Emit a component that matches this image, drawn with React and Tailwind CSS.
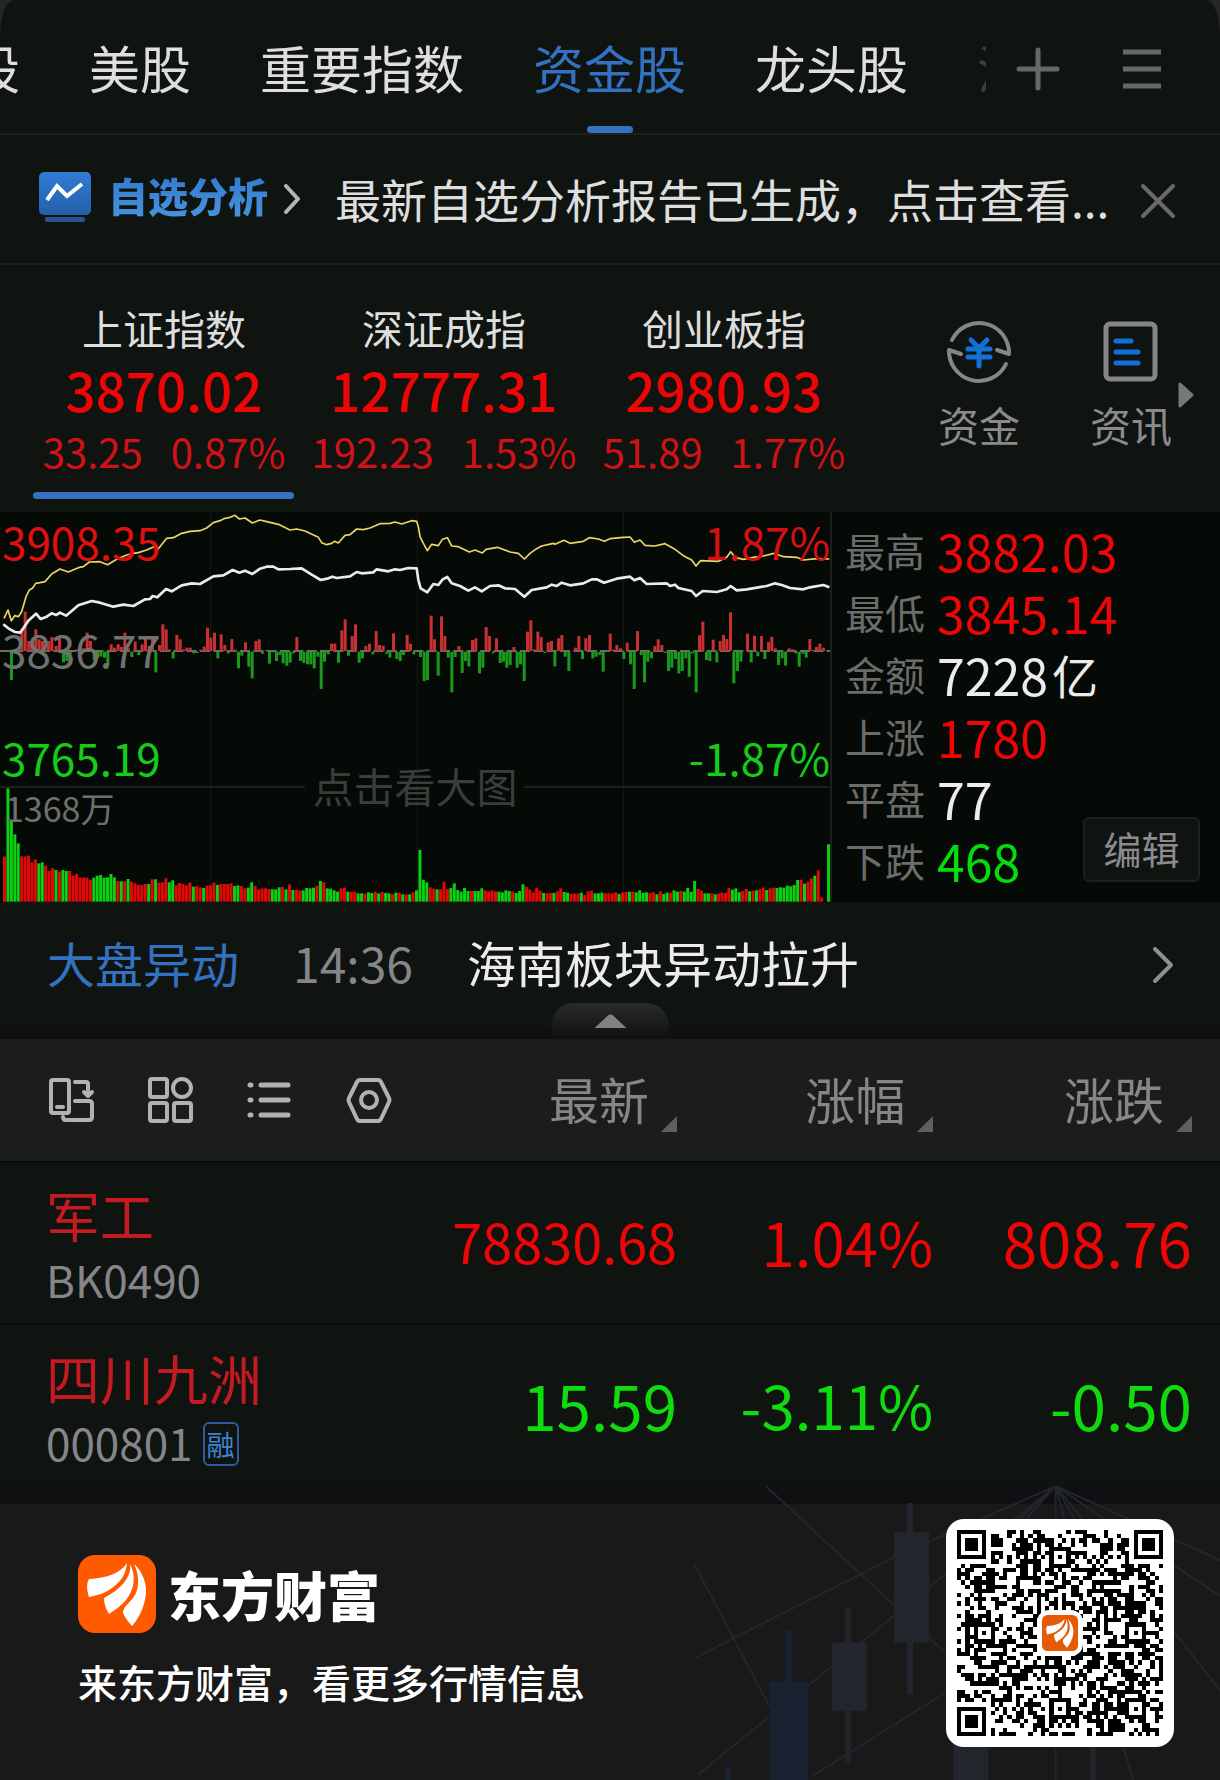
import React from "react";

const TABS = ["港股", "美股", "重要指数", "资金股", "龙头股", "沪股通"];

const INDICES = [
  { name: "上证指数", value: "3870.02", diff: "33.25", pct: "0.87%", active: true },
  { name: "深证成指", value: "12777.31", diff: "192.23", pct: "1.53%" },
  { name: "创业板指", value: "2980.93", diff: "51.89", pct: "1.77%" },
];

const STATS = [
  { label: "最高", value: "3882.03", tone: "text-[#ee0505]" },
  { label: "最低", value: "3845.14", tone: "text-[#ee0505]" },
  { label: "金额", value: "7228", unit: "亿", tone: "text-[#ececec]" },
  { label: "上涨", value: "1780", tone: "text-[#ee0505]" },
  { label: "平盘", value: "77", tone: "text-[#ececec]" },
  { label: "下跌", value: "468", tone: "text-[#06db0e]" },
];

const STOCKS = [
  { name: "军工", code: "BK0490", last: "78830.68", pct: "1.04%", diff: "808.76", tone: "text-[#ee0505]", lastSize: "text-[54px]" },
  { name: "四川九洲", code: "000801", tag: "融", last: "15.59", pct: "-3.11%", diff: "-0.50", tone: "text-[#0fdc0f]", lastSize: "text-[62px]" },
];

/* Chart data, in thirds of a pixel. */
const AVG_LINE =
  "12,355 24,330 34,362 44,347 55,350 65,335 78,290 88,270 98,264 107,250 120,248 135,245 155,222 180,207 205,216 235,203 250,200 268,186 300,185 323,194 350,178 380,165 400,160 415,158 440,150 460,141 475,146 500,115 520,113 545,100 570,94 600,92 620,84 640,68 660,62 675,55 690,52 705,46 718,57 735,54 757,69 780,60 800,65 835,73 870,90 890,87 915,93 955,112 965,128 980,134 995,130 1003,124 1015,129 1035,106 1050,104 1070,87 1090,89 1110,84 1140,71 1170,70 1185,66 1205,72 1235,62 1250,64 1256,85 1260,110 1270,130 1282,152 1295,133 1315,137 1327,118 1342,113 1355,138 1375,140 1408,156 1425,150 1447,159 1458,148 1492,142 1530,156 1555,160 1573,177 1590,160 1610,146 1625,138 1660,130 1665,133 1692,121 1710,130 1750,124 1768,113 1795,117 1813,124 1830,116 1870,112 1890,111 1903,127 1920,120 1935,136 1965,138 1995,131 2025,148 2050,167 2075,180 2088,198 2102,182 2155,184 2180,172 2192,155 2205,172 2230,178 2260,172 2290,168 2322,160 2350,170 2390,172 2410,180 2450,176 2488,177";
const PRICE_LINE =
  "10,373 25,385 45,396 60,398 70,385 85,362 108,341 122,357 140,350 155,340 168,345 180,338 198,347 215,333 235,316 275,303 300,308 340,320 370,314 400,318 435,298 450,297 458,288 472,292 498,267 515,274 545,256 575,250 600,252 640,229 670,226 698,210 718,218 735,212 757,222 780,206 800,200 820,200 835,208 870,207 905,205 935,224 962,240 985,235 997,230 1010,234 1050,229 1070,216 1085,220 1120,217 1130,208 1165,214 1185,208 1200,210 1225,204 1250,205 1255,240 1262,265 1282,277 1300,252 1315,255 1328,238 1342,231 1355,250 1380,258 1405,272 1425,262 1445,274 1470,258 1495,256 1515,265 1545,267 1573,290 1595,270 1640,262 1655,254 1670,258 1685,248 1710,256 1750,250 1775,238 1790,238 1812,248 1850,236 1890,230 1903,241 1920,234 1940,252 2000,250 2010,258 2025,254 2035,264 2075,273 2088,288 2108,273 2150,276 2180,268 2192,258 2210,271 2240,268 2275,262 2300,258 2325,250 2345,255 2370,264 2410,268 2430,262 2470,255 2488,262";

const MOMENTUM = [
  [34,-85],[65,60],[75,118],[86,30],[96,30],[107,65],[117,35],[127,30],[145,30],[155,42],[168,15],[178,40],[190,-32],[200,-28],[210,-10],[230,5],[240,10],[250,8],[261,55],[271,30],[282,-25],[292,-20],[302,-15],[313,-18],[323,-40],[333,20],[343,10],[354,20],[364,12],[374,55],[385,8],[395,-16],[405,28],[416,-10],[426,20],[436,45],[447,15],[457,42],[467,-62],[478,18],[488,80],[498,65],[508,5],[519,-20],[530,48],[540,35],[550,5],[560,10],[570,10],[581,-5],[591,-4],[602,4],[612,13],[622,70],[632,40],[643,55],[653,-20],[663,50],[674,18],[684,-5],[695,36],[705,4],[715,-50],[725,-12],[736,26],[746,-45],[756,-80],[767,30],[777,35],[787,-6],[798,2],[808,-36],[818,-2],[829,-28],[839,-10],[849,-35],[860,-42],[870,-33],[880,-5],[890,42],[901,-28],[911,-34],[922,-38],[932,-38],[942,-50],[953,-15],[963,-112],[973,-30],[984,-8],[994,22],[1004,22],[1015,-33],[1025,62],[1035,95],[1045,-12],[1056,45],[1066,80],[1077,-33],[1087,-20],[1097,15],[1108,22],[1118,-8],[1128,60],[1138,18],[1149,16],[1159,-6],[1169,-18],[1180,53],[1190,-22],[1200,-28],[1210,-10],[1221,48],[1231,22],[1241,-8],
  [1261,-16],[1272,-88],[1282,-85],[1293,106],[1303,35],[1314,-72],[1324,104],[1334,45],[1344,-18],[1355,-122],[1365,-16],[1376,15],[1386,-64],[1396,-28],[1406,-44],[1417,33],[1427,38],[1438,-65],[1448,-48],[1458,72],[1468,45],[1479,-5],[1489,38],[1500,-34],[1510,-30],[1520,-48],[1530,-40],[1541,12],[1551,-48],[1561,-38],[1572,-88],[1582,58],[1592,92],[1602,5],[1613,58],[1623,42],[1634,-4],[1644,26],[1654,30],[1664,-44],[1675,38],[1685,48],[1695,-15],[1706,-58],[1726,10],[1736,45],[1747,-22],[1757,38],[1768,48],[1778,-20],[1788,-15],[1799,-10],[1809,-60],[1830,52],[1840,4],[1850,18],[1861,8],[1871,-22],[1881,25],[1891,-38],[1902,-112],[1912,60],[1923,-10],[1933,-92],[1943,-30],[1954,-20],[1964,15],[1974,35],[1985,18],[1995,-4],[2005,-58],[2015,-48],[2026,-22],[2036,-65],[2046,-58],[2057,-20],[2067,-75],[2077,-5],[2088,-122],[2098,47],[2108,88],[2119,-25],[2129,-28],[2139,34],[2150,-32],[2160,30],[2170,48],[2180,36],[2191,116],[2201,-95],[2212,-58],[2222,-30],[2242,52],[2253,-32],[2263,46],[2273,-14],[2284,45],[2294,-22],[2305,27],[2315,43],[2325,8],[2335,-40],[2346,-20],[2356,-42],[2367,8],[2377,5],[2387,-5],[2397,-45],[2408,-6],[2418,-18],[2429,36],[2439,3],[2449,12],[2459,22],[2470,10],
];

/* Positive bars are red, negative bars are green. */
const VOLUME = [
  135,-340,-245,-202,-175,136,136,138,118,127,-115,-118,108,92,100,-95,90,-95,-92,92,78,83,73,72,72,66,-72,-78,-80,-72,-73,-83,-73,62,-61,61,-68,60,55,50,50,53,-53,67,-67,57,58,70,-58,-64,50,56,53,49,57,-45,47,43,-41,48,49,57,-50,53,53,53,55,-47,-49,47,40,-42,-58,47,37,40,40,38,-37,-37,-43,44,-37,52,-35,36,34,-34,-41,-40,-42,48,-62,58,-40,-39,-34,-30,40,42,-30,29,30,-25,-25,24,-28,-26,30,-25,29,-26,-25,22,-27,27,-22,22,-22,28,
  -34,-155,-66,-58,43,39,-37,37,60,38,-41,-55,-35,-30,-41,-32,32,-32,-32,-40,34,31,34,31,-30,-28,-34,-32,30,-26,-32,-52,44,36,28,42,33,-26,25,26,-26,31,40,-29,-27,24,24,24,-27,20,31,33,-25,-25,-27,25,25,25,28,-23,28,29,-30,30,-28,-34,-27,-28,26,28,-22,31,-23,-27,27,-34,-30,33,-30,-41,-30,-62,38,33,-25,-25,25,-22,24,27,26,41,-36,-40,-28,32,38,-31,33,-34,38,42,-35,40,42,-41,-43,-42,-48,-46,-50,-65,66,-54,60,70,-78,94,12,0,-172,
];

function Chart() {
  return (
    <svg viewBox="0 36 2490 1170" preserveAspectRatio="none" className="block h-full w-full" role="img" aria-label="上证指数分时图">
      <g stroke="#161b18" strokeWidth="3">
        <path d="M632 36V1205M1252 36V1205M1870 36V1205" />
      </g>
      <path d="M0 861H915M1572 861H2490" stroke="#252826" strokeWidth="5" />
      <path d="M0 453H2490" stroke="#8c8f8d" strokeWidth="4" strokeDasharray="30 10" />
      {MOMENTUM.map(([x, h]) => (
        <rect key={x} x={x - 4} y={h > 0 ? 453 - h : 455} width="9" height={Math.abs(h)} fill={h > 0 ? "#c93032" : "#1b991d"} />
      ))}
      {VOLUME.map((h, i) => (
        <rect key={i} x={9 + i * 10.3} y={1205 - Math.abs(h)} width="9" height={Math.abs(h)} fill={h > 0 ? "#e20808" : "#0bcf10"} />
      ))}
      <polyline points={AVG_LINE} fill="none" stroke="#ead565" strokeWidth="5" strokeLinejoin="round" />
      <polyline points={PRICE_LINE} fill="none" stroke="#ebebeb" strokeWidth="8" strokeLinejoin="round" />
    </svg>
  );
}

/* The three-feather mark on an orange tile. */
function Mark({ className, fill = "#ff5a00", radius = 17 }) {
  return (
    <svg viewBox="0 0 78 78" className={className} aria-hidden="true">
      <rect width="78" height="78" rx={radius} fill={fill} />
      <g fill="#fff">
        <path d="M49 8C43 18 29 23 11 24C8 29 9 36 11 42C20 40 27 38 31 35C42 28 48 20 49 8Z" />
        <path d="M52 9C54 22 43 34 26 43C26 49 28 54 31 59C37 55 44 50 48 45C57 34 58 20 52 9Z" />
        <path d="M56 9C63 15 68 25 68 36C68 48 62 62 54 71C50 66 46 62 45 57C46 50 54 47 58 38C62 28 60 17 56 9Z" />
      </g>
    </svg>
  );
}

const QR_N = 49;

function buildQr() {
  let seed = 20481;
  const next = () => {
    seed = (seed * 1103515245 + 12345) % 2147483648;
    return seed / 2147483648;
  };
  const grid = Array.from({ length: QR_N }, () => Array.from({ length: QR_N }, () => next() > 0.49));
  for (let i = 8; i < QR_N - 8; i++) {
    grid[6][i] = i % 2 === 0;
    grid[i][6] = i % 2 === 0;
  }
  const square = (cy, cx, reach, rings) => {
    for (let y = -reach; y <= reach; y++)
      for (let x = -reach; x <= reach; x++) {
        if (grid[cy + y] && cx + x >= 0 && cx + x < QR_N) grid[cy + y][cx + x] = rings[Math.max(Math.abs(x), Math.abs(y))];
      }
  };
  [[3, 3], [3, QR_N - 4], [QR_N - 4, 3]].forEach(([y, x]) => square(y, x, 4, [true, true, false, true, false]));
  [[6, 24], [24, 6], [24, 42], [42, 24], [42, 42]].forEach(([y, x]) => square(y, x, 2, [true, false, true]));
  let d = "";
  grid.forEach((row, y) => row.forEach((on, x) => { if (on) d += `M${x} ${y}h1v1h-1z`; }));
  return d;
}

const QR_PATH = buildQr();

function QrCode() {
  return (
    <div className="relative h-[228px] w-[228px] shrink-0 rounded-[18px] bg-white p-[11px]">
      <svg viewBox="0 0 49 49" className="block h-full w-full" shapeRendering="crispEdges" role="img" aria-label="二维码">
        <path d={QR_PATH} fill="#000" />
      </svg>
      <div className="absolute inset-0 m-auto h-[46px] w-[46px] rounded-xl bg-white p-[5px]">
        <Mark className="block h-9 w-9" fill="#e65a05" radius={12} />
      </div>
    </div>
  );
}

function FooterArt() {
  return (
    <svg viewBox="0 0 560 293" preserveAspectRatio="xMaxYMin slice" className="absolute right-0 -top-[18px] h-[294px] w-[46%]" aria-hidden="true">
      <g stroke="#21262e" strokeWidth="2" fill="none">
        <path d="M107 0L286 166M37 171L235 71L396 0M36 78L111 220M39 288L286 88L396 0M152 290L286 206" />
        <path d="M396 0L560 74M396 0L560 110M396 0L514 145L560 204M396 0L330 60M396 0L360 40M396 0L412 60M396 0L430 60M396 0V293M464 261L473 293" />
      </g>
      <g fill="#22262c">
        <path d="M248 17h6v191h-6zM235 46h35v110h-35zM186 121h6v155h-6zM173 156h35v68h-35zM294 250h35v43h-35zM430 250h6v43h-6z" />
      </g>
      <path d="M127 143h7v60h-7zM111 195h38v98h-38zM67 280h5v13h-5z" fill="#192230" />
    </svg>
  );
}

const iconProps = { fill: "none", stroke: "currentColor", strokeWidth: 4, strokeLinecap: "round", strokeLinejoin: "round", "aria-hidden": true };

export default function App() {
  return (
    <main lang="zh-CN" className="w-full overflow-hidden whitespace-nowrap bg-[#262626] font-['Noto_Sans_CJK_SC',sans-serif]">
      <div className="rounded-tl-[14px_36px] rounded-tr-[14px_36px] bg-[#101411]">
        {/* Tabs */}
        <header className="flex h-[135px] items-center border-b-2 border-[#1d211e] pr-[58px] pt-1">
          <nav className="relative flex h-full min-w-0 flex-1 gap-[69px] overflow-hidden">
            {TABS.map((t, i) => (
              <button
                key={t}
                type="button"
                className={
                  "relative h-full shrink-0 pb-1 text-[51px] leading-[60px] " +
                  (t === "资金股" ? "text-[#3272c0] " : "text-[#dedede] ") +
                  (i === 0 ? "-ml-[82px]" : "")
                }
              >
                {t}
                {t === "资金股" && <span className="absolute bottom-0 left-1/2 h-[7px] w-[46px] -translate-x-1/2 rounded-full bg-[#3272c0]" />}
              </button>
            ))}
            <span className="absolute inset-y-0 right-0 w-3 bg-[#101411]/80" />
          </nav>
          <button type="button" aria-label="添加" className="ml-[30px] text-[#666866]">
            <svg viewBox="0 0 44 44" className="h-11 w-11" {...iconProps} strokeWidth={5}><path d="M22 3V41M3 22H41" /></svg>
          </button>
          <button type="button" aria-label="菜单" className="ml-[62px] text-[#666866]">
            <svg viewBox="0 0 40 40" className="h-10 w-10" {...iconProps} strokeWidth={5} strokeLinecap="butt"><path d="M1 3H39M1 20H39M1 37H39" /></svg>
          </button>
        </header>

        {/* Analysis banner */}
        <section className="flex h-[130px] items-center border-b-2 border-[#1d211e] pl-[39px] pr-[44px] pt-1">
          <a href="#analysis" className="flex shrink-0 items-center">
            <svg viewBox="0 0 52 50" className="mb-2 h-[50px] w-[52px]" aria-hidden="true">
              <defs>
                <linearGradient id="tile" x1="0" y1="0" x2="0" y2="1">
                  <stop offset="0" stopColor="#2f7bd6" />
                  <stop offset="1" stopColor="#2460a8" />
                </linearGradient>
              </defs>
              <rect width="52" height="43" rx="5" fill="url(#tile)" />
              <rect x="6" y="45" width="40" height="5" rx="2" fill="#27548f" />
              <path d="M8 28L18 14L28 24L43 12" fill="none" stroke="#fff" strokeWidth="4" />
            </svg>
            <span className="mb-3 ml-[17px] bg-gradient-to-b from-[#2f76cc] to-[#4a96e0] bg-clip-text text-[40px] font-black leading-[60px] text-transparent">自选分析</span>
            <svg viewBox="0 0 16 30" className="mb-1 ml-[16px] h-[30px] w-4 text-[#b4b4b4]" {...iconProps} strokeWidth={4}><path d="M2 2L14 15L2 28" /></svg>
          </a>
          <p className="mb-[6px] ml-[35px] min-w-0 flex-1 overflow-hidden text-[46px] leading-[64px] text-[#dedede]">最新自选分析报告已生成，点击查看...</p>
          <button type="button" aria-label="关闭" className="text-[#6a6a6a]">
            <svg viewBox="0 0 36 36" className="h-9 w-9" {...iconProps}><path d="M3 3L33 33M33 3L3 33" /></svg>
          </button>
        </section>

        {/* Index summary */}
        <section className="relative flex justify-between pl-6 pr-[13px]">
          <div className="grid w-[71%] shrink-0 grid-cols-3">
            {INDICES.map((x) => (
              <button key={x.name} type="button" className="flex flex-col items-center pb-[13px] pt-8">
                <span className="text-[41px] leading-[60px] text-[#dedede]">{x.name}</span>
                <span className="text-[53px] font-medium leading-[64px] text-[#ee0505]">{x.value}</span>
                <span className="flex gap-7 text-[40px] leading-[60px] text-[#d01216]">
                  <span>{x.diff}</span>
                  <span>{x.pct}</span>
                </span>
                <span className={"mt-[11px] h-[7px] w-[261px] rounded-full " + (x.active ? "bg-[#3272c0]" : "")} />
              </button>
            ))}
          </div>
          <div className="flex pt-[54px] text-[#8b8b8f]">
            <button type="button" className="flex w-[152px] flex-col items-center">
              <svg viewBox="0 0 66 66" className="h-[66px] w-[66px]" fill="none" strokeLinecap="round" strokeLinejoin="round" aria-hidden="true">
                <g stroke="#85858a" strokeWidth="4">
                  <path d="M6 21A30 30 0 0 1 63 35L51 31" />
                  <path d="M60 45A30 30 0 0 1 3 31L15 35" />
                </g>
                <path d="M25 21L33 29L41 21M22 30H44M22 38H44M33 29V47" stroke="#1370d8" strokeWidth="5" />
              </svg>
              <span className="mt-[9px] text-[41px] leading-[60px]">资金</span>
            </button>
            <button type="button" className="flex w-[152px] flex-col items-center">
              <svg viewBox="0 0 66 66" className="h-[66px] w-[66px]" fill="none" strokeLinecap="round" aria-hidden="true">
                <rect x="8" y="5" width="49" height="55" rx="4" stroke="#85858a" strokeWidth="5" />
                <path d="M18 22H33M18 33H40M18 44H40" stroke="#1370d8" strokeWidth="5" />
              </svg>
              <span className="mt-[9px] text-[41px] leading-[60px]">资讯</span>
            </button>
          </div>
          <svg viewBox="0 0 16 26" className="absolute right-[26px] top-[117px] h-[26px] w-4" aria-hidden="true">
            <path d="M2 2L14 13L2 24Z" fill="#77797a" stroke="#77797a" strokeWidth="3" strokeLinejoin="round" />
          </svg>
        </section>

        {/* Intraday chart and market breadth */}
        <section className="flex h-[390px] bg-[#060a07]">
          <div className="relative w-[68.2%] shrink-0 border-r-2 border-[#1c201d] text-[44px] leading-[50px]">
            <Chart />
            <span className="absolute left-[2px] top-[4px] text-[#e01010]">3908.35</span>
            <span className="absolute left-[2px] top-[112px] text-[#707270]">3836.77</span>
            <span className="absolute left-[2px] top-[220px] text-[#16cc1a]">3765.19</span>
            <span className="absolute right-0 top-[4px] text-[#d41010]">1.87%</span>
            <span className="absolute right-0 top-[220px] text-[#16cc1a]">-1.87%</span>
            <span className="absolute left-[5px] top-[271px] text-[34px] text-[#6e706e]">1368万</span>
            <button type="button" className="absolute left-1/2 top-[248px] -translate-x-1/2 text-[41px] text-[#3b3d3b]">点击看大图</button>
          </div>
          <div className="relative min-w-0 flex-1 pl-[13px] pt-[7px]">
            <dl>
              {STATS.map((s) => (
                <div key={s.label} className="flex h-[62px] items-center gap-3">
                  <dt className="text-[40px] leading-[60px] text-[#6b6d6b]">{s.label}</dt>
                  <dd className={"flex items-center gap-1 text-[50px] leading-[60px] " + s.tone}>
                    {s.value}
                    {s.unit && <span className="text-[46px]">{s.unit}</span>}
                  </dd>
                </div>
              ))}
            </dl>
            <button type="button" className="absolute bottom-5 right-5 h-[65px] w-[117px] rounded-md border-2 border-[#1d211e] bg-[#101411] pb-1 text-[38px] leading-[56px] text-[#8b8b8f]">编辑</button>
          </div>
        </section>

        {/* Market news */}
        <section className="relative flex h-[125px] items-center pl-[47px] pr-[46px] text-[48px] leading-[60px]">
          <a href="#moves" className="mb-[6px] text-[#3272c0]">大盘异动</a>
          <time className="mb-[6px] ml-[54px] text-[#85858a]">14:36</time>
          <a href="#news" className="mb-[6px] ml-[54px] flex-1 text-[49px] text-[#ececec]">海南板块异动拉升</a>
          <svg viewBox="0 0 22 38" className="h-[38px] w-[22px] text-[#8f8f8f]" {...iconProps}><path d="M3 3L19 19L3 35" /></svg>
          <button type="button" aria-label="收起" className="absolute -bottom-2 left-1/2 flex h-8 w-[117px] -translate-x-1/2 items-center justify-center rounded-t-[22px] bg-gradient-to-b from-[#2a2c2b] to-[#121412] pt-1">
            <svg viewBox="0 0 32 14" className="h-[14px] w-8" aria-hidden="true"><path d="M0 14L14 1Q16 0 18 1L32 14Z" fill="#828282" /></svg>
          </button>
        </section>
      </div>

      <div className="h-3 bg-[#101010]" />

      {/* Watch list */}
      <table className="w-full table-fixed border-collapse bg-[#101411]">
        <colgroup>
          <col className="w-[33%]" />
          <col className="w-[22.5%]" />
          <col className="w-[21%]" />
          <col className="w-[23.5%]" />
        </colgroup>
        <thead className="bg-[#1b1d1b]">
          <tr className="h-[123px]">
            <th scope="col" className="pl-12 font-normal">
              <div className="flex gap-[51px] text-[#b2b2b2]">
                <button type="button" aria-label="切换布局">
                  <svg viewBox="0 0 48 48" className="h-12 w-12" {...iconProps}>
                    <path d="M5 4H19Q21 4 21 6V35Q21 37 19 37H5Q3 37 3 35V6Q3 4 5 4ZM9 31H15" />
                    <path d="M27 6H38Q40 6 40 8V19M36 16L40 20L44 16M27 25H41Q44 25 44 28V41Q44 44 41 44H18Q15 44 15 41" />
                  </svg>
                </button>
                <button type="button" aria-label="宫格">
                  <svg viewBox="0 0 48 48" className="h-12 w-12" {...iconProps}>
                    <rect x="3" y="3" width="17" height="18" rx="2" />
                    <circle cx="35" cy="12" r="9" />
                    <rect x="3" y="27" width="17" height="18" rx="2" />
                    <rect x="27" y="27" width="17" height="18" rx="2" />
                  </svg>
                </button>
                <button type="button" aria-label="列表">
                  <svg viewBox="0 0 48 48" className="h-12 w-12" {...iconProps} strokeWidth={5}>
                    <path d="M15 9H42M15 24H42M15 39H42M4 9H5M4 24H5M4 39H5" />
                  </svg>
                </button>
                <button type="button" aria-label="设置">
                  <svg viewBox="0 0 48 48" className="h-12 w-12" {...iconProps}>
                    <path d="M15 4H33Q35 4 36 6L44 22Q45 24 44 26L36 43Q35 45 33 45H15Q13 45 12 43L4 26Q3 24 4 22L12 6Q13 4 15 4Z" />
                    <circle cx="24" cy="24" r="8" />
                  </svg>
                </button>
              </div>
            </th>
            {["最新", "涨幅", "涨跌"].map((h, i) => (
              <th key={h} scope="col" className={"font-normal " + (i === 2 ? "pr-7" : "")}>
                <button type="button" className="ml-auto flex items-end gap-3 text-[50px] leading-[60px] text-[#85858a]">
                  <span className="mb-1">{h}</span>
                  <svg viewBox="0 0 16 16" className="h-4 w-4" aria-hidden="true"><path d="M16 0V16H0Z" fill="#5e605e" /></svg>
                </button>
              </th>
            ))}
          </tr>
        </thead>
        <tbody>
          {STOCKS.map((s) => (
            <tr key={s.code} className={"h-[162px] border-t-2 border-[#0a0d0b] " + s.tone}>
              <th scope="row" className="pl-[46px] pt-1 text-left font-normal">
                <div className="text-[54px] leading-[68px] text-[#c41a22]">{s.name}</div>
                <div className="flex items-center gap-[10px] text-[44px] leading-[60px] text-[#85858a]">
                  {s.code}
                  {s.tag && <span className="mt-1 flex h-11 w-9 items-center justify-center rounded-md border-2 border-[#2c5c99] text-[28px] text-[#3f82d2]">{s.tag}</span>}
                </div>
              </th>
              <td className={"pb-1 text-right leading-[70px] " + s.lastSize}>{s.last}</td>
              <td className="pb-1 text-right text-[60px] leading-[70px]">{s.pct}</td>
              <td className="pb-1 pr-7 text-right text-[62px] leading-[70px]">{s.diff}</td>
            </tr>
          ))}
        </tbody>
      </table>

      {/* Brand footer */}
      <footer className="relative flex h-[294px] justify-between border-t-[18px] border-[#110f12] bg-[#191919] pl-[78px] pr-[46px]">
        <FooterArt />
        <div className="relative pt-[51px]">
          <div className="flex items-center gap-3">
            <Mark className="h-[78px] w-[78px]" />
            <h2 className="text-[53px] font-black leading-[78px] text-white">东方财富</h2>
          </div>
          <p className="mt-[18px] text-[39px] font-medium leading-[60px] text-white">来东方财富，看更多行情信息</p>
        </div>
        <div className="relative pt-[15px]">
          <QrCode />
        </div>
      </footer>
    </main>
  );
}
